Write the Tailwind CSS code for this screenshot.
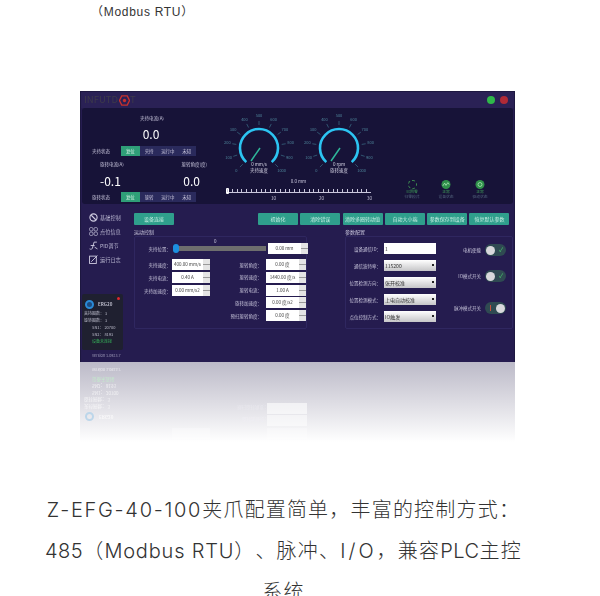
<!DOCTYPE html>
<html lang="zh-CN">
<head>
<meta charset="UTF-8" />
<title>Z-EFG-40-100</title>
<script src="https://cdn.jsdelivr.net/npm/@tailwindcss/browser@4"></script>
</head>
<body class="bg-white font-['Noto_Sans_CJK_SC','Noto_Sans',sans-serif]">
<div class="w-[600px] h-[596px] overflow-hidden">

    <p class="pl-[91px] pt-[3px] h-[91px] text-[12px] leading-[18px] tracking-[0.7px] text-[#333] font-['Liberation_Sans','Noto_Sans_CJK_SC',sans-serif]">（Modbus RTU）</p>

    <!-- soft window -->
    <div class="ml-[80px] w-[435px] h-[271px] bg-[#251c4f] border-x border-t border-[#1d1740] text-[4.5px] leading-[6px] text-[#c9c6dc] blur-[0.35px] flex flex-col overflow-hidden">

        <!-- title bar -->
        <div class="h-[16px] flex items-center px-[1px] bg-[#2a2155]">
            <span class="pl-[2px] text-[9.500px] text-[#3d3a4a] leading-none">INFUTD</span>
            <svg class="w-[11px] h-[11px] ml-[1px]" viewBox="0 0 12 12"><path d="M3 1H9L11.500 6L9 11H3L.5 6Z" fill="none" stroke="#c8302c" stroke-width="1.500"/><circle cx="6" cy="6" r="1.800" fill="#c8302c"/></svg>
            <span class="text-[9.500px] text-[#3d3a4a] leading-none">T</span>
            <div class="ml-auto flex gap-[5px] pr-[5px]">
                <span class="w-[8px] h-[8px] rounded-full bg-[#2fb84a]"></span>
                <span class="w-[8px] h-[8px] rounded-full bg-[#b02a36]"></span>
            </div>
        </div>

        <!-- status panel -->
        <div class="h-[96px] mx-[1px] bg-[#171338] rounded-[3px] flex">
            <div class="w-[137px] shrink-0 pl-[10px] pt-[7px]">
                <p class="text-center w-[120px]">夹持电流(A)</p>
                <p class="text-center w-[118px] text-[12px] leading-[16px] mt-[5px] text-white">0.0</p>
                <div class="flex items-center mt-[4px] h-[10px]">
                    <span class="w-[29px] shrink-0">夹持状态</span>
                    <div class="w-[75px] h-[10px] bg-[#2a2a5c] grid grid-cols-4 text-center leading-[10px]">
                        <span class="bg-[#2f9f78] text-[#d5f2e6]">复位</span><span>夹持</span><span>运行中</span><span>未知</span>
                    </div>
                </div>
                <div class="flex justify-between w-[115px] pl-[8px] mt-[5px]"><span>旋转电流(A)</span><span>旋转角度(度)</span></div>
                <div class="flex justify-between w-[108px] pl-[8px] text-[12px] leading-[16px] mt-[6px] text-white"><span>-0.1</span><span>0.0</span></div>
                <div class="flex items-center mt-[3px] h-[10px]">
                    <span class="w-[29px] shrink-0">旋转状态</span>
                    <div class="w-[75px] h-[10px] bg-[#2a2a5c] grid grid-cols-4 text-center leading-[10px]">
                        <span class="bg-[#2f9f78] text-[#d5f2e6]">复位</span><span>旋转</span><span>运行中</span><span>未知</span>
                    </div>
                </div>
            </div>

            <div class="w-[160px] shrink-0">
                <div class="flex h-[70px]">
                    <svg data-gauge="夹持速度" data-unit="0 mm/s" class="w-[80px] h-[70px] shrink-0" viewBox="0 0 80 70"></svg>
                    <svg data-gauge="旋转速度" data-unit="0 rpm" class="w-[80px] h-[70px] shrink-0" viewBox="0 0 80 70"></svg>
                </div>
                <p class="-ml-[1px] text-center">0.0 mm</p>
                <div class="relative ml-[8px] mt-[5px] w-[144px] h-[4px] border-b border-[#c9c6dc]">
                    <span class="absolute -left-[1px] -bottom-[2px] w-[3px] h-[6px] rounded-[1px] bg-white"></span>
                    <span class="absolute inset-0 bg-[repeating-linear-gradient(90deg,#c9c6dc_0_1px,transparent_1px_4.800px)] h-[3px]"></span>
                </div>
                <div class="relative ml-[8px] mt-[2px] w-[144px] h-[6px]">
                    <span class="absolute left-[44px]">10</span><span class="absolute left-[92px]">20</span><span class="absolute left-[140px]">30</span>
                </div>
            </div>

            <div class="flex-1 flex justify-center gap-[16px] pt-[72px] text-[3.800px] leading-[5px] text-center">
                <div class="w-[18px] text-[#3f9c58]">
                    <span class="block mx-auto w-[9px] h-[9px] rounded-full border border-dashed border-[#3f8f52]"></span>
                    <p>已回零</p><p class="text-[#50607a] whitespace-nowrap">归零模式</p>
                </div>
                <div class="w-[18px] text-[#3f9c58]">
                    <svg class="block mx-auto w-[10px] h-[9px]" viewBox="0 0 10 10"><circle cx="5" cy="5" r="5" fill="#2f8f4a"/><path d="M1.500 6.500 3.500 3.500 5 6 7 3 8.500 5" fill="none" stroke="#b8f0c0" stroke-width=".8"/></svg>
                    <p>正常</p><p class="text-[#50607a] whitespace-nowrap">设备状态</p>
                </div>
                <div class="w-[18px] text-[#3f9c58]">
                    <svg class="block mx-auto w-[10px] h-[9px]" viewBox="0 0 10 10"><circle cx="5" cy="5" r="5" fill="#2f8f4a"/><circle cx="5" cy="5" r="2.200" fill="none" stroke="#b8f0c0" stroke-width=".8"/></svg>
                    <p>正常</p><p class="text-[#50607a] whitespace-nowrap">驱动状态</p>
                </div>
            </div>
        </div>

        <!-- lower area -->
        <div class="flex-1 flex min-h-0">
            <aside class="w-[52px] shrink-0 flex flex-col pl-[1px]">
                <nav class="pt-[9px] pl-[7px] flex flex-col gap-[5px] text-[5.200px] leading-[9px] text-[#b9b6d0]">
                    <div class="flex items-center gap-[2px]">
                        <svg class="w-[9px] h-[9px]" viewBox="0 0 8 8"><circle cx="4" cy="4" r="3.200" fill="none" stroke="#d0cde2"/><path d="M2 2 6 6" stroke="#d0cde2"/></svg><span>基础控制</span>
                    </div>
                    <div class="flex items-center gap-[2px]">
                        <svg class="w-[9px] h-[9px]" viewBox="0 0 8 8" fill="none" stroke="#b9b6d0" stroke-width=".7"><rect x=".5" y=".5" width="3" height="3" rx="1"/><rect x="4.500" y=".5" width="3" height="3" rx="1"/><rect x=".5" y="4.500" width="3" height="3" rx="1"/><rect x="4.500" y="4.500" width="3" height="3" rx="1"/></svg><span>点位信息</span>
                    </div>
                    <div class="flex items-center gap-[2px]">
                        <svg class="w-[9px] h-[9px]" viewBox="0 0 8 8" fill="none" stroke="#d0cde2" stroke-width=".8"><path d="M7 1H4.500L3 6.500C2.500 7.500 1.500 7.500 .5 7M1.500 4H5M5 5.500 7.500 7"/></svg><span>PID调节</span>
                    </div>
                    <div class="flex items-center gap-[2px]">
                        <svg class="w-[9px] h-[9px]" viewBox="0 0 8 8" fill="none" stroke="#d0cde2" stroke-width=".8"><rect x=".5" y="1" width="6" height="6.500"/><path d="M2 6 7.500 .5"/></svg><span>运行日志</span>
                    </div>
                </nav>
                <div class="relative mt-[30px] w-[41px] h-[56px] rounded-[2px] bg-[#1f2030] pl-[2px] pt-[6px] text-[4px] leading-[7px] text-[#bcbccb]">
                    <span class="absolute top-[3px] right-[3px] w-[3px] h-[3px] rounded-full bg-[#e0282e]"></span>
                    <div class="flex items-center gap-[4px] mb-[1px] pl-[1px]">
                        <span class="w-[9px] h-[9px] rounded-full border-2 border-[#2a8ad8] bg-[#1c4a80]"></span>
                        <span class="text-[4.500px] font-bold">ERG20</span>
                    </div>
                    <p>夹持圈数：&nbsp;3</p>
                    <p>旋转圈数：&nbsp;3</p>
                    <p class="pl-[8px]">SN1：&nbsp;20700</p>
                    <p class="pl-[8px]">SN2：&nbsp;8193</p>
                    <p class="pl-[8px] text-[#35b45a]">设备未连接</p>
                </div>
                <p class="mt-[3px] pl-[10px] text-[3.800px] text-[#9d9ab8]">Version 1.0923.7</p>
            </aside>

            <main class="flex-1 min-w-0 pt-[9px]">
                <div class="flex pl-[1px] text-[5px] leading-[12px] text-center text-[#c7eee3]">
                    <button class="w-[40px] h-[12px] rounded-[1px] bg-[#2f9f8c]">设备连接</button>
                    <div class="ml-[84px] flex gap-[2.300px]">
                        <button class="w-[40px] h-[12px] rounded-[1px] bg-[#2f9f8c]">初始化</button>
                        <button class="w-[40px] h-[12px] rounded-[1px] bg-[#2f9f8c]">清除错误</button>
                        <button class="w-[40px] h-[12px] rounded-[1px] bg-[#2f9f8c] whitespace-nowrap">清除多圈转动值</button>
                        <button class="w-[40px] h-[12px] rounded-[1px] bg-[#2f9f8c]">自动大小端</button>
                        <button class="w-[40px] h-[12px] rounded-[1px] bg-[#2f9f8c] whitespace-nowrap">参数保存到设备</button>
                        <button class="w-[40px] h-[12px] rounded-[1px] bg-[#2f9f8c]">恢复默认参数</button>
                    </div>
                </div>

                <div class="flex mt-[3px] text-[4.500px]">
                    <!-- motion control -->
                    <section class="w-[174px] shrink-0 pl-[1px]">
                        <h3 class="text-[5px] leading-[7px]">运动控制</h3>
                        <div class="mt-[1px] h-[93px] border border-[#2f2760] rounded-[2px] text-center relative">
                            <span class="absolute left-[79px] top-[1px]">0</span>
                            <div class="flex items-center mt-[6px] h-[11px]">
                                <span class="w-[36px] text-right shrink-0">夹持位置：</span>
                                <div class="relative ml-[2px] w-[93px] h-[5px] bg-[#6e6e6e] shrink-0">
                                    <span class="absolute left-0 -top-[2px] w-[6px] h-[9px] rounded-[3px] bg-[#1c8fe0]"></span>
                                </div>
                                <div class="ml-[2px] w-[40px] h-[11px] leading-[11px] bg-white text-[#444] flex shrink-0"><span class="flex-1">0.00 mm</span><span class="w-[7px] bg-[linear-gradient(#e4e4e4_45%,#999_45%_55%,#e4e4e4_55%)]"></span></div>
                            </div>
                            <div class="flex mt-[5px]">
                                <div class="w-[77px] flex flex-col gap-[2px] shrink-0">
                                    <div class="flex items-center h-[11px]"><span class="w-[36px] text-right shrink-0">夹持速度：</span><div class="ml-[1px] w-[38px] h-[11px] leading-[11px] bg-white text-[#444] flex whitespace-nowrap"><span class="flex-1">400.00 mm/s</span><span class="w-[7px] bg-[linear-gradient(#e4e4e4_45%,#999_45%_55%,#e4e4e4_55%)]"></span></div></div>
                                    <div class="flex items-center h-[11px]"><span class="w-[36px] text-right shrink-0">夹持电流：</span><div class="ml-[1px] w-[38px] h-[11px] leading-[11px] bg-white text-[#444] flex"><span class="flex-1">0.40 A</span><span class="w-[7px] bg-[linear-gradient(#e4e4e4_45%,#999_45%_55%,#e4e4e4_55%)]"></span></div></div>
                                    <div class="flex items-center h-[11px]"><span class="w-[36px] text-right shrink-0 whitespace-nowrap">夹持加速度：</span><div class="ml-[1px] w-[38px] h-[11px] leading-[11px] bg-white text-[#444] flex whitespace-nowrap"><span class="flex-1">0.00 mm/s2</span><span class="w-[7px] bg-[linear-gradient(#e4e4e4_45%,#999_45%_55%,#e4e4e4_55%)]"></span></div></div>
                                </div>
                                <div class="flex-1 flex flex-col gap-[1.800px]">
                                    <div class="flex items-center justify-end h-[11px]"><span class="mr-[4px]">旋转角度：</span><div class="w-[40px] h-[11px] leading-[11px] bg-white text-[#444] flex"><span class="flex-1">0.00 度</span><span class="w-[7px] bg-[linear-gradient(#e4e4e4_45%,#999_45%_55%,#e4e4e4_55%)]"></span></div></div>
                                    <div class="flex items-center justify-end h-[11px]"><span class="mr-[4px]">旋转速度：</span><div class="w-[40px] h-[11px] leading-[11px] bg-white text-[#444] flex whitespace-nowrap"><span class="flex-1">1440.00 度/s</span><span class="w-[7px] bg-[linear-gradient(#e4e4e4_45%,#999_45%_55%,#e4e4e4_55%)]"></span></div></div>
                                    <div class="flex items-center justify-end h-[11px]"><span class="mr-[4px]">旋转电流：</span><div class="w-[40px] h-[11px] leading-[11px] bg-white text-[#444] flex"><span class="flex-1">1.00 A</span><span class="w-[7px] bg-[linear-gradient(#e4e4e4_45%,#999_45%_55%,#e4e4e4_55%)]"></span></div></div>
                                    <div class="flex items-center justify-end h-[11px]"><span class="mr-[4px]">旋转加速度：</span><div class="w-[40px] h-[11px] leading-[11px] bg-white text-[#444] flex whitespace-nowrap"><span class="flex-1">0.00 度/s2</span><span class="w-[7px] bg-[linear-gradient(#e4e4e4_45%,#999_45%_55%,#e4e4e4_55%)]"></span></div></div>
                                    <div class="flex items-center justify-end h-[11px]"><span class="mr-[4px]">预扫旋转角度：</span><div class="w-[40px] h-[11px] leading-[11px] bg-white text-[#444] flex"><span class="flex-1">0.00 度</span><span class="w-[7px] bg-[linear-gradient(#e4e4e4_45%,#999_45%_55%,#e4e4e4_55%)]"></span></div></div>
                                </div>
                            </div>
                        </div>
                    </section>

                    <!-- parameters -->
                    <section class="ml-[38px] w-[168px] shrink-0">
                        <h3 class="text-[5px] leading-[7px]">参数配置</h3>
                        <div class="mt-[1px] h-[93px] border border-[#2f2760] rounded-[2px] flex pt-[6px]">
                            <div class="w-[90px] shrink-0 flex flex-col gap-[6px]">
                                <div class="flex items-center justify-end h-[11px]"><span class="mr-[3px]">设备通信ID：</span><div class="w-[52px] h-[11px] leading-[11px] bg-white text-[#333] pl-[1px] text-[5px]">1</div></div>
                                <div class="flex items-center justify-end h-[11px]"><span class="mr-[3px]">通信波特率：</span><div class="relative w-[52px] h-[11px] leading-[11px] bg-gradient-to-b from-white to-[#c6c6c8] text-[#333] pl-[1px] text-[5px]">115200<span class="absolute right-[2px] top-[4px] w-[2px] h-[2px] bg-[#222]"></span></div></div>
                                <div class="flex items-center justify-end h-[11px]"><span class="mr-[3px]">位置检测方向：</span><div class="relative w-[52px] h-[11px] leading-[11px] bg-gradient-to-b from-white to-[#c6c6c8] text-[#333] pl-[1px] text-[5px]">张开校准<span class="absolute right-[2px] top-[4px] w-[2px] h-[2px] bg-[#222]"></span></div></div>
                                <div class="flex items-center justify-end h-[11px]"><span class="mr-[3px]">位置检测模式：</span><div class="relative w-[52px] h-[11px] leading-[11px] bg-gradient-to-b from-white to-[#c6c6c8] text-[#333] pl-[1px] text-[5px]">上电自动校准<span class="absolute right-[2px] top-[4px] w-[2px] h-[2px] bg-[#222]"></span></div></div>
                                <div class="flex items-center justify-end h-[11px]"><span class="mr-[3px]">点位控制方式：</span><div class="relative w-[52px] h-[11px] leading-[11px] bg-gradient-to-b from-white to-[#c6c6c8] text-[#333] pl-[1px] text-[5px]">IO触发<span class="absolute right-[2px] top-[4px] w-[2px] h-[2px] bg-[#222]"></span></div></div>
                            </div>
                            <div class="flex-1 pr-[6px]">
                                <div class="flex items-center justify-end gap-[4px] h-[12px] mt-[1px]"><span>电机使能</span><span class="w-[21px] h-[12px] rounded-full bg-[#2f4a52] flex items-center justify-between pl-[1px] pr-[3px]"><span class="w-[9px] h-[9px] rounded-full bg-[#d8d8dc]"></span><span class="text-[#4cd070] text-[6px]">✓</span></span></div>
                                <div class="flex items-center justify-end gap-[4px] h-[12px] mt-[14px]"><span>IO模式开关</span><span class="w-[21px] h-[12px] rounded-full bg-[#2f4a52] flex items-center justify-between pl-[1px] pr-[3px]"><span class="w-[9px] h-[9px] rounded-full bg-[#d8d8dc]"></span><span class="text-[#4cd070] text-[6px]">✓</span></span></div>
                                <div class="flex items-center justify-end gap-[4px] h-[12px] mt-[20px]"><span>脉冲模式开关</span><span class="w-[21px] h-[12px] rounded-full bg-[#2f4a52] flex items-center justify-between pl-[5px] pr-[1px]"><span class="w-[1px] h-[6px] bg-[#c8503c]"></span><span class="w-[9px] h-[9px] rounded-full bg-[#d8d8dc]"></span></span></div>
                            </div>
                        </div>
                    </section>
                </div>
            </main>
        </div>
    </div>

    <!-- mirrored reflection under the window -->
    <div class="relative ml-[80px] w-[435px] h-[80px] bg-gradient-to-b from-[#bcbac8] via-[#dddce3] to-white text-[4.500px] leading-[6px] text-white/70 blur-[0.4px] overflow-hidden">
        <p class="absolute left-[12px] top-[4px] text-[3.800px] -scale-y-100">Version 1.0923.7</p>
        <p class="absolute left-[12px] top-[15px] text-[#c4e8cc] -scale-y-100">设备未连接</p>
        <p class="absolute left-[12px] top-[21px] -scale-y-100">SN2： 8193</p>
        <p class="absolute left-[12px] top-[28px] -scale-y-100">SN1： 20700</p>
        <p class="absolute left-[4px] top-[35px] -scale-y-100">旋转圈数： 3</p>
        <p class="absolute left-[4px] top-[42px] -scale-y-100">夹持圈数： 3</p>
        <span class="absolute left-[5px] top-[50px] w-[9px] h-[9px] rounded-full border-2 border-[#bcd6ea]"></span>
        <p class="absolute left-[19px] top-[52px] -scale-y-100 font-bold">ERG20</p>
        <p class="absolute left-[157px] top-[43px] text-[#e9e8ee] -scale-y-100">预扫旋转角度：</p>
        <div class="absolute left-[187px] top-[41px] w-[40px] h-[11px] bg-white/60"></div>
        <p class="absolute left-[162px] top-[55px] text-[#efeef3] -scale-y-100">旋转加速度：</p>
        <div class="absolute left-[187px] top-[53px] w-[40px] h-[11px] bg-white/50"></div>
        <div class="absolute left-[92px] top-[66px] w-[38px] h-[11px] bg-white/30"></div>
        <div class="absolute left-[187px] top-[66px] w-[40px] h-[11px] bg-white/30"></div>
    </div>

    <!-- caption -->
    <div class="mt-[47px] w-[567px] text-center text-[20px] leading-[40px] tracking-[1.200px] text-[#333] font-light [text-spacing-trim:space-all]">
        <p class="whitespace-nowrap"><span class="font-['Inter'] tracking-[1.700px]">Z-EFG-40-100</span>夹爪配置简单，丰富的控制方式：</p>
        <p class="whitespace-nowrap"><span class="font-['Inter'] tracking-[0.5px]">485</span>（<span class="font-['Inter'] tracking-[0.8px]">Modbus RTU</span>）、脉冲、<span class="font-['Inter'] tracking-[3px]">I/O</span>，兼容<span class="font-['Inter'] tracking-[0.5px]">PLC</span>主控</p>
        <p>系统</p>
    </div>
</div>

<script>
    // draw the two dials, ticks and labels are the same on both
    const NS = "http://www.w3.org/2000/svg";
    function add(svg, tag, attrs, text) {
        const el = document.createElementNS(NS, tag);
        for (const k in attrs) el.setAttribute(k, attrs[k]);
        if (text) el.textContent = text;
        svg.appendChild(el);
    }
    document.querySelectorAll("[data-gauge]").forEach(svg => {
        const cx = 40, cy = 40, r = 19;
        const pt = (deg, rad) => {
            const a = deg * Math.PI / 180;
            return [cx + rad * Math.cos(a), cy + rad * Math.sin(a)];
        };
        const [sx, sy] = pt(132, r), [ex, ey] = pt(48, r);
        add(svg, "path", { d: `M${sx} ${sy}A${r} ${r} 0 1 1 ${ex} ${ey}`, fill: "none", stroke: "#2cc4f2", "stroke-width": 2.6 });
        for (let i = 0; i <= 10; i++) {
            const deg = 135 + i * 27;
            const [x1, y1] = pt(deg, 23), [x2, y2] = pt(deg, 27), [lx, ly] = pt(deg, 32);
            add(svg, "line", { x1, y1, x2, y2, stroke: "#3f7f95", "stroke-width": 0.6 });
            add(svg, "text", { x: lx, y: ly + 1.4, "text-anchor": "middle", "font-size": 4, fill: "#4d8298" }, String(i * 100));
        }
        add(svg, "line", { x1: 32, y1: 53, x2: 41, y2: 40, stroke: "#2fb79a", "stroke-width": 1.5 });
        add(svg, "text", { x: 40, y: 58, "text-anchor": "middle", "font-size": 4.5, fill: "#d5d3e4" }, svg.dataset.unit);
        add(svg, "text", { x: 40, y: 63.5, "text-anchor": "middle", "font-size": 4.5, fill: "#d5d3e4" }, svg.dataset.gauge);
    });
</script>
</body>
</html>
